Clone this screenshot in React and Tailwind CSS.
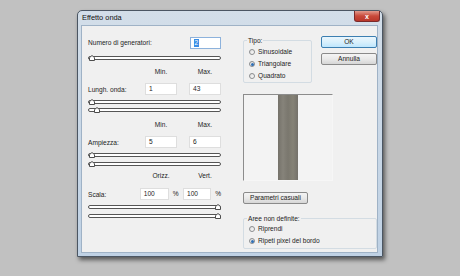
export default function App() {
  return (
    <div className="w-[460px] h-[276px] bg-[#c1c1c1] pl-[77px] pt-[10px] font-['Liberation_Sans',Arial,sans-serif] text-[#1c1c1c]">
      <Dialog />
    </div>
  );
}

function Dialog() {
  return (
    <div className="relative w-[306px] h-[247px] border border-[#4b5663] rounded-t-[5px] bg-[linear-gradient(180deg,#d3dee9,#bfd1e4)] shadow-[2px_3px_4px_rgba(0,0,0,0.55)]">
      {/* title bar */}
      <div className="h-[14px] pl-[4px] flex items-center text-[7.4px] leading-none text-[#111]">
        Effetto onda
      </div>
      <div className="absolute right-[2px] top-[0px] w-[26px] h-[11px] rounded-b-[3px] border border-[#7a2a2a] border-t-0 bg-[linear-gradient(180deg,#e39a8c,#c8493a_50%,#b9372a)] flex items-center justify-center text-white text-[7px] font-bold leading-none">
        x
      </div>
      {/* client */}
      <div className="ml-[3px] w-[297px] h-[228px] border border-[#9fb2c6] bg-[#f0f0f0] flex pl-[6px] text-[6.6px] leading-none">
        <LeftColumn />
        <RightColumn />
      </div>
    </div>
  );
}

function Thumb({ pos }) {
  return (
    <svg className={`absolute -top-[2px] ${pos}`} width="6" height="6" viewBox="0 0 6 6">
      <path d="M0.5 5.5V2.6L3 0.5L5.5 2.6V5.5Z" fill="#fff" stroke="#4d4d4d" />
    </svg>
  );
}

function Slider({ pos, className = "" }) {
  return (
    <div className={`relative h-[4px] w-[133px] rounded-[2px] border border-[#555] bg-white ${className}`}>
      <Thumb pos={pos} />
    </div>
  );
}

function Field({ value, w = "w-[32px]", sel = false }) {
  return (
    <div className={`${w} h-[12px] bg-white border ${sel ? "border-[#8db2dc]" : "border-[#dedede]"} flex items-center pl-[3px]`}>
      {sel ? (
        <span className="bg-[#3a8ee6] text-white px-[0.5px] h-[8px] flex items-center">{value}</span>
      ) : (
        value
      )}
    </div>
  );
}

function Heads({ a, b, className = "" }) {
  return (
    <div className={`flex h-[8px] items-center ${className}`}>
      <div className="w-[57px]" />
      <div className="w-[32px] text-center">{a}</div>
      <div className="w-[12px]" />
      <div className="w-[32px] text-center">{b}</div>
    </div>
  );
}

function LeftColumn() {
  return (
    <div className="w-[133px] flex flex-col">
      <div className="mt-[11px] h-[12px] flex items-center">
        <div className="w-[102px] pt-[1px]">Numero di generatori:</div>
        <Field value="2" w="w-[31px]" sel />
      </div>
      <Slider pos="left-[0px]" className="mt-[7px]" />

      <Heads a="Min." b="Max." className="mt-[8px]" />
      <div className="mt-[7px] h-[12px] flex items-center">
        <div className="w-[57px] pt-[2px]">Lungh. onda:</div>
        <Field value="1" />
        <div className="w-[12px]" />
        <Field value="43" />
      </div>
      <Slider pos="left-[0px]" className="mt-[5px]" />
      <Slider pos="left-[5px]" className="mt-[4px]" />

      <Heads a="Min." b="Max." className="mt-[9px]" />
      <div className="mt-[7px] h-[12px] flex items-center">
        <div className="w-[57px] pt-[3px]">Ampiezza:</div>
        <Field value="5" />
        <div className="w-[12px]" />
        <Field value="6" />
      </div>
      <Slider pos="left-[0px]" className="mt-[5px]" />
      <Slider pos="left-[0px]" className="mt-[5px]" />

      <Heads a="Orizz." b="Vert." className="mt-[6px]" />
      <div className="mt-[8px] h-[12px] flex items-center">
        <div className="w-[56px] pt-[2px]">Scala:</div>
        <Field value="100" w="w-[31px]" />
        <div className="w-[15px] pl-[4px]">%</div>
        <Field value="100" w="w-[30px]" />
        <div className="ml-[4px]">%</div>
      </div>
      <Slider pos="left-[126px]" className="mt-[5px]" />
      <Slider pos="left-[126px]" className="mt-[5px]" />
    </div>
  );
}

function Radio({ label, checked = false }) {
  return (
    <div className="h-[12px] flex items-center">
      <div className="w-[6px] h-[6px] rounded-full border border-[#8a8c8e] bg-[linear-gradient(135deg,#dcdcdc,#ffffff)] flex items-center justify-center">
        {checked && <div className="w-[3px] h-[3px] rounded-full bg-[#2f6fb5]" />}
      </div>
      <div className="ml-[3px] pt-[1px]">{label}</div>
    </div>
  );
}

function Group({ label, className = "", children }) {
  return (
    <div className={`relative border border-[#d3dce3] rounded-[2px] ${className}`}>
      <div className="absolute left-[3px] -top-[4px] px-[1px] bg-[#f0f0f0] h-[8px] flex items-center">{label}</div>
      {children}
    </div>
  );
}

function Button({ children, primary = false, className = "" }) {
  return (
    <div
      className={`h-[12px] rounded-[2px] border flex items-center justify-center pt-[1px] ${
        primary
          ? "border-[#3c7fb1] bg-[linear-gradient(180deg,#eaf6fd,#d9f0fc_50%,#bee6fd)]"
          : "border-[#8a8a8a] bg-[linear-gradient(180deg,#f4f4f4,#e9e9e9_50%,#d6d6d6)]"
      } ${className}`}
    >
      {children}
    </div>
  );
}

function RightColumn() {
  return (
    <div className="ml-[22px] w-[134px] flex flex-col">
      <div className="flex items-start">
        <Group label="Tipo:" className="mt-[14px] w-[69px] h-[43px] pt-[5px] pl-[5px]">
          <Radio label="Sinusoidale" />
          <Radio label="Triangolare" checked />
          <Radio label="Quadrato" />
        </Group>
        <div className="ml-[9px] mt-[10px] w-[56px] flex flex-col">
          <Button primary>OK</Button>
          <Button className="mt-[5px]">Annulla</Button>
        </div>
      </div>

      <div className="mt-[11px] w-[90px] h-[87px] border-t border-l border-[#8c8c8c] border-r-[#f6f6f6] border-b-[#f6f6f6] border-r border-b bg-[#f3f3f3] pl-[34px]">
        <div className="w-[20px] h-full bg-[linear-gradient(90deg,#75726a,#86837a_25%,#7a776e_50%,#858276_75%,#74716a)]" />
      </div>

      <Button className="mt-[11px] w-[65px] h-[11px]">Parametri casuali</Button>

      <Group label="Aree non definite:" className="mt-[14px] w-[134px] h-[31px] pt-[4px] pl-[5px]">
        <Radio label="Riprendi" />
        <Radio label="Ripeti pixel del bordo" checked />
      </Group>
    </div>
  );
}
